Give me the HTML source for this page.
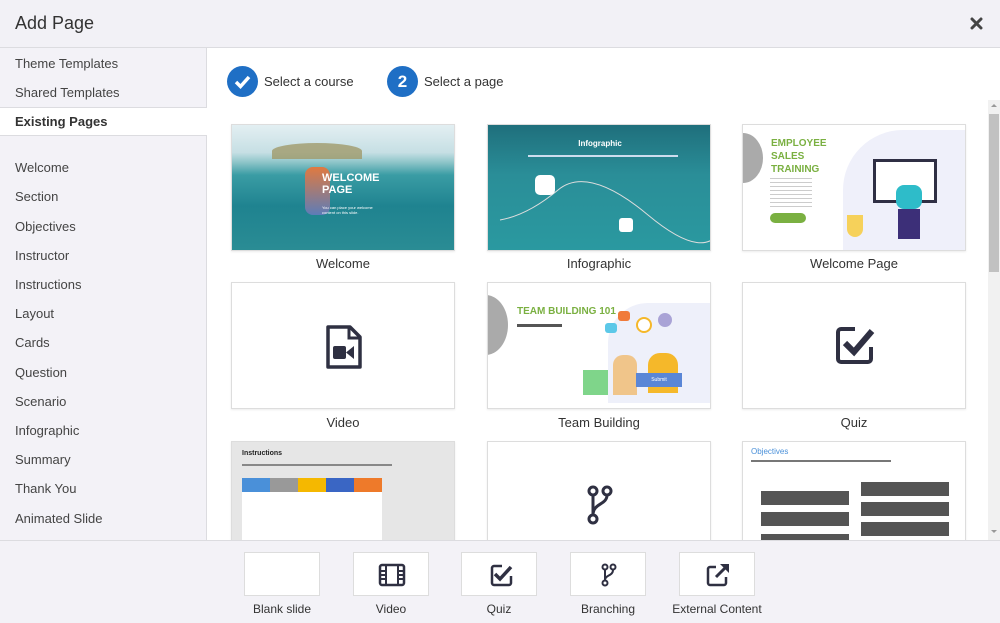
<!DOCTYPE html>
<html><head><meta charset="utf-8">
<style>
*{box-sizing:border-box;margin:0;padding:0}
body{width:1000px;height:623px;overflow:hidden;font-family:"Liberation Sans",sans-serif;background:#fff;position:relative;color:#333}
.abs{position:absolute}
.hdr{left:0;top:0;width:1000px;height:48px;background:#f2f1f6;border-bottom:1px solid #dcdce0}
.hdr h1{position:absolute;left:15px;top:13px;font-size:18px;font-weight:normal;color:#333}
.side{left:0;top:48px;width:207px;height:492px;background:#f3f2f7;border-right:1px solid #dcdce0}
.side .t{position:absolute;left:15px;font-size:13px;color:#444}
.ex{left:0;top:107px;width:207px;height:29px;background:#fff;border-top:1px solid #dcdce0;border-bottom:1px solid #dcdce0}
.card{position:absolute;width:224px;height:127px;border:1px solid #ddd;background:#fff;box-shadow:0 1px 2px rgba(0,0,0,.08);overflow:hidden}
.lbl{position:absolute;width:224px;text-align:center;font-size:13px;color:#333}
.foot{left:0;top:540px;width:1000px;height:83px;background:#f3f2f7;border-top:1px solid #dcdce0}
.fb{position:absolute;top:11px;width:76px;height:44px;background:#fff;border:1px solid #ddd}
.fl{position:absolute;top:61px;font-size:12px;color:#333;text-align:center;width:130px}
.step{position:absolute;width:31px;height:31px;border-radius:50%;background:#1f6fc5;color:#fff;font-size:17px;font-weight:bold;text-align:center;line-height:31px}
</style></head><body>
<div class="abs hdr"><h1>Add Page</h1>
<svg class="abs" style="left:970px;top:17px" width="13" height="13" viewBox="0 0 13 13"><path d="M2 2L11 11M11 2L2 11" stroke="#444" stroke-width="3" stroke-linecap="round"/></svg></div>

<div class="abs side">
<div class="t" style="top:8px">Theme Templates</div>
<div class="t" style="top:37px">Shared Templates</div>
<div class="t" style="top:112px">Welcome</div>
<div class="t" style="top:141px">Section</div>
<div class="t" style="top:171px">Objectives</div>
<div class="t" style="top:200px">Instructor</div>
<div class="t" style="top:229px">Instructions</div>
<div class="t" style="top:258px">Layout</div>
<div class="t" style="top:287px">Cards</div>
<div class="t" style="top:317px">Question</div>
<div class="t" style="top:346px">Scenario</div>
<div class="t" style="top:375px">Infographic</div>
<div class="t" style="top:404px">Summary</div>
<div class="t" style="top:433px">Thank You</div>
<div class="t" style="top:463px">Animated Slide</div>
</div>
<div class="abs ex"><div style="position:absolute;left:15px;top:6px;font-size:13px;font-weight:bold;color:#333">Existing Pages</div></div>

<div class="step" style="left:227px;top:66px"><svg width="31" height="31" viewBox="0 0 31 31"><path d="M9 16l4.5 4.5L22 11" stroke="#fff" stroke-width="3.5" fill="none"/></svg></div>
<div class="abs" style="left:264px;top:74px;font-size:13px">Select a course</div>
<div class="step" style="left:387px;top:66px">2</div>
<div class="abs" style="left:424px;top:74px;font-size:13px">Select a page</div>

<!-- scrollbar -->
<div class="abs" style="left:988px;top:100px;width:12px;height:440px;background:#f1f1f1"></div>
<div class="abs" style="left:989px;top:114px;width:10px;height:158px;background:#c1c1c1"></div>
<div class="abs" style="left:991px;top:104px;width:0;height:0;border:3px solid transparent;border-bottom-color:#999;border-top:0"></div>
<div class="abs" style="left:991px;top:530px;width:0;height:0;border:3px solid transparent;border-top-color:#999;border-bottom:0"></div>

<!-- row1 -->
<div class="card" style="left:231px;top:124px;background:linear-gradient(180deg,#e3eff2 0%,#c6dfe4 22%,#8cc4c8 30%,#3a9ca4 40%,#1f8390 65%,#2a8c94 100%)">
<div class="abs" style="left:40px;top:18px;width:90px;height:16px;background:#a09a6a;border-radius:50% 50% 0 0;opacity:.8"></div>
<div class="abs" style="left:73px;top:42px;width:25px;height:48px;background:linear-gradient(#e07a40,#5d7cb8);border-radius:8px"></div>
<div class="abs" style="left:90px;top:47px;color:#fff;font-weight:bold;font-size:11px;line-height:12px">WELCOME<br>PAGE</div>
<div class="abs" style="left:90px;top:80px;color:#fff;font-size:4px;line-height:5px">You can place your welcome<br>content on this slide.</div></div>
<div class="lbl" style="left:231px;top:256px">Welcome</div>

<div class="card" style="left:487px;top:124px;background:linear-gradient(180deg,#1f6f7c,#2a8e98 40%,#2a99a0 100%)">
<div class="abs" style="left:0;top:14px;width:224px;text-align:center;color:#fff;font-weight:bold;font-size:8px">Infographic</div>
<div class="abs" style="left:40px;top:30px;width:150px;height:2px;background:#cde"></div>
<svg class="abs" style="left:0;top:40px" width="224" height="80"><path d="M12 55 Q40 50 70 25 T160 50 T235 60" stroke="#ddd" fill="none"/><rect x="47" y="10" width="20" height="20" rx="5" fill="#fff"/><rect x="131" y="53" width="14" height="14" rx="3" fill="#fff"/></svg></div>
<div class="lbl" style="left:487px;top:256px">Infographic</div>

<div class="card" style="left:742px;top:124px">
<div class="abs" style="left:-20px;top:8px;width:40px;height:50px;background:#aaa;border-radius:50%"></div>
<div class="abs" style="left:28px;top:12px;color:#7ab041;font-weight:bold;font-size:10px;line-height:13px">EMPLOYEE<br>SALES<br>TRAINING</div>
<div class="abs" style="left:27px;top:53px;width:42px;height:30px;background:repeating-linear-gradient(#ccc 0 1px,transparent 1px 4px)"></div>
<div class="abs" style="left:27px;top:88px;width:36px;height:10px;background:#7ab041;border-radius:5px"></div>
<div class="abs" style="left:100px;top:5px;width:124px;height:122px;background:#eff0fa;border-radius:60px 0 0 0"></div>
<div class="abs" style="left:130px;top:34px;width:64px;height:44px;background:#fff;border:3px solid #2f2f44"></div>
<div class="abs" style="left:153px;top:60px;width:26px;height:24px;background:#2ebcc9;border-radius:8px"></div>
<div class="abs" style="left:155px;top:84px;width:22px;height:30px;background:#3c2f78"></div>
<div class="abs" style="left:104px;top:90px;width:16px;height:22px;background:#f6d15a;border-radius:0 0 8px 8px"></div></div>
<div class="lbl" style="left:742px;top:256px">Welcome Page</div>

<!-- row2 -->
<div class="card" style="left:231px;top:282px"><svg class="abs" style="left:93px;top:42px" width="38" height="44" viewBox="0 0 38 44"><path d="M3 2h22l10 10v30H3z" fill="none" stroke="#2f3042" stroke-width="3.5" stroke-linejoin="round"/><path d="M24 2v11h11" fill="none" stroke="#2f3042" stroke-width="3"/><rect x="8" y="21" width="13" height="13" rx="2" fill="#2f3042"/><path d="M21 27.5L29 21v13z" fill="#2f3042"/></svg></div>
<div class="lbl" style="left:231px;top:415px">Video</div>

<div class="card" style="left:487px;top:282px">
<div class="abs" style="left:-25px;top:12px;width:45px;height:60px;background:#aaa;border-radius:50%"></div>
<div class="abs" style="left:29px;top:23px;color:#7ab041;font-weight:bold;font-size:10px">TEAM BUILDING 101</div>
<div class="abs" style="left:29px;top:41px;width:45px;height:3px;background:#555"></div>
<div class="abs" style="left:120px;top:20px;width:104px;height:100px;background:#eef0fa;border-radius:40px 0 0 0"></div>
<div class="abs" style="left:130px;top:28px;width:12px;height:10px;background:#f07a3a;border-radius:3px"></div>
<div class="abs" style="left:117px;top:40px;width:12px;height:10px;background:#5cc8e8;border-radius:3px"></div>
<div class="abs" style="left:148px;top:34px;width:16px;height:16px;border:2px solid #f5b82a;border-radius:50%;background:#fff"></div>
<div class="abs" style="left:170px;top:30px;width:14px;height:14px;background:#a9a3d6;border-radius:50%"></div>
<div class="abs" style="left:95px;top:87px;width:25px;height:25px;background:#7fd58a"></div>
<div class="abs" style="left:125px;top:72px;width:24px;height:40px;background:#f0c58a;border-radius:10px 10px 0 0"></div>
<div class="abs" style="left:160px;top:70px;width:30px;height:40px;background:#f5b82a;border-radius:12px 12px 0 0"></div>
<div class="abs" style="left:148px;top:90px;width:46px;height:14px;background:#5a86d6;color:#fff;font-size:5px;text-align:center;line-height:14px">Submit</div></div>
<div class="lbl" style="left:487px;top:415px">Team Building</div>

<div class="card" style="left:742px;top:282px"><svg class="abs" style="left:92px;top:42px" width="40" height="40" viewBox="0 0 40 40"><path d="M20 4H6a3 3 0 0 0-3 3v27a3 3 0 0 0 3 3h27a3 3 0 0 0 3-3V22" fill="none" stroke="#2f3042" stroke-width="4"/><path d="M10 18l9 9L37 6" fill="none" stroke="#2f3042" stroke-width="6"/></svg></div>
<div class="lbl" style="left:742px;top:415px">Quiz</div>

<!-- row3 -->
<div class="card" style="left:231px;top:441px;height:110px;background:#e6e6e6">
<div class="abs" style="left:10px;top:8px;font-size:7px;font-weight:bold;color:#222">Instructions</div>
<div class="abs" style="left:10px;top:22px;width:150px;height:2px;background:#888"></div>
<div class="abs" style="left:10px;top:36px;width:28px;height:14px;background:#4a90d9"></div>
<div class="abs" style="left:38px;top:36px;width:28px;height:14px;background:#999"></div>
<div class="abs" style="left:66px;top:36px;width:28px;height:14px;background:#f5b800"></div>
<div class="abs" style="left:94px;top:36px;width:28px;height:14px;background:#3a66c4"></div>
<div class="abs" style="left:122px;top:36px;width:28px;height:14px;background:#ee7a2a"></div>
<div class="abs" style="left:10px;top:50px;width:140px;height:50px;background:#fff"></div></div>

<div class="card" style="left:487px;top:441px;height:110px"><svg class="abs" style="left:99px;top:43px" width="26" height="40" viewBox="0 0 26 40"><circle cx="6" cy="6" r="4" fill="none" stroke="#2f3042" stroke-width="3"/><circle cx="20" cy="6" r="4" fill="none" stroke="#2f3042" stroke-width="3"/><circle cx="6" cy="34" r="4" fill="none" stroke="#2f3042" stroke-width="3"/><path d="M6 10v20M20 10c0 10-14 8-14 20" fill="none" stroke="#2f3042" stroke-width="3"/></svg></div>

<div class="card" style="left:742px;top:441px;height:110px">
<div class="abs" style="left:8px;top:5px;color:#4a90d9;font-size:8px">Objectives</div>
<div class="abs" style="left:8px;top:18px;width:140px;height:2px;background:#777"></div>
<div class="abs" style="left:118px;top:40px;width:88px;height:14px;background:#555"></div>
<div class="abs" style="left:18px;top:49px;width:88px;height:14px;background:#555"></div>
<div class="abs" style="left:118px;top:60px;width:88px;height:14px;background:#555"></div>
<div class="abs" style="left:18px;top:70px;width:88px;height:14px;background:#555"></div>
<div class="abs" style="left:118px;top:80px;width:88px;height:14px;background:#555"></div>
<div class="abs" style="left:18px;top:92px;width:88px;height:14px;background:#555"></div></div>

<!-- footer -->
<div class="abs foot">
<div class="fb" style="left:244px"></div>
<div class="fb" style="left:353px"><svg class="abs" style="left:24px;top:10px" width="28" height="24" viewBox="0 0 28 24"><rect x="2" y="2" width="24" height="20" rx="2" fill="none" stroke="#2f3042" stroke-width="2.5"/><path d="M8 2v20M20 2v20M2 8h6M2 12h6M2 16h6M20 8h6M20 12h6M20 16h6" stroke="#2f3042" stroke-width="2"/></svg></div>
<div class="fb" style="left:461px"><svg class="abs" style="left:27px;top:10px" width="24" height="24" viewBox="0 0 24 24"><path d="M13 3H5a2 2 0 0 0-2 2v15a2 2 0 0 0 2 2h15a2 2 0 0 0 2-2v-7" fill="none" stroke="#2f3042" stroke-width="2.5"/><path d="M6 11l5 5L22 4" fill="none" stroke="#2f3042" stroke-width="3.5"/></svg></div>
<div class="fb" style="left:570px"><svg class="abs" style="left:30px;top:10px" width="16" height="24" viewBox="0 0 16 24"><circle cx="4" cy="4" r="2.5" fill="none" stroke="#2f3042" stroke-width="2"/><circle cx="12" cy="4" r="2.5" fill="none" stroke="#2f3042" stroke-width="2"/><circle cx="4" cy="20" r="2.5" fill="none" stroke="#2f3042" stroke-width="2"/><path d="M4 7v10M12 7c0 6-8 5-8 10" fill="none" stroke="#2f3042" stroke-width="2"/></svg></div>
<div class="fb" style="left:679px"><svg class="abs" style="left:25px;top:9px" width="26" height="26" viewBox="0 0 26 26"><path d="M11 5H5a2 2 0 0 0-2 2v14a2 2 0 0 0 2 2h14a2 2 0 0 0 2-2v-6" fill="none" stroke="#2f3042" stroke-width="2.5"/><path d="M11 15L22 4" stroke="#2f3042" stroke-width="3"/><path d="M15 2h9v9z" fill="#2f3042"/></svg></div>
<div class="fl" style="left:217px">Blank slide</div>
<div class="fl" style="left:326px">Video</div>
<div class="fl" style="left:434px">Quiz</div>
<div class="fl" style="left:543px">Branching</div>
<div class="fl" style="left:652px">External Content</div>
</div>
</body></html>
